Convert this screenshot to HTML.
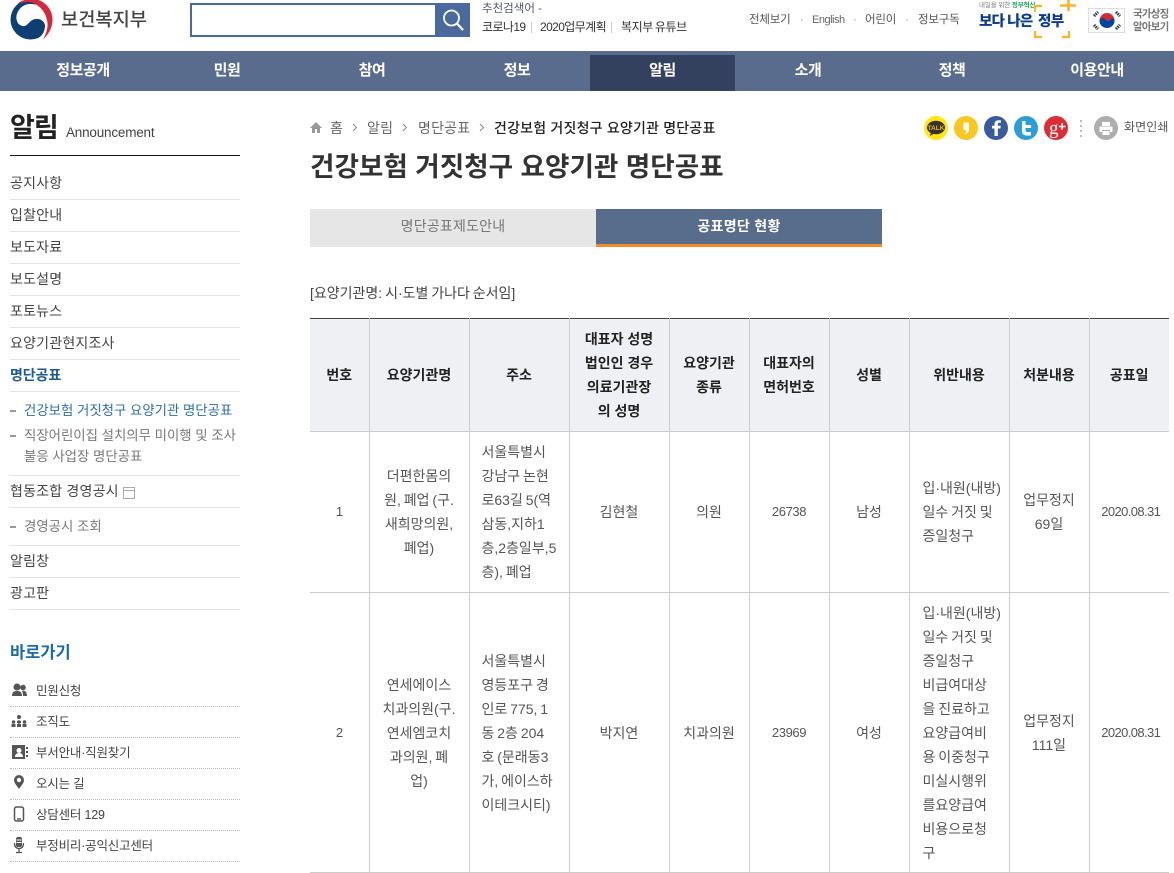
<!DOCTYPE html>
<html lang="ko"><head><meta charset="utf-8"><title>건강보험 거짓청구 요양기관 명단공표</title>
<style>
*{box-sizing:border-box}
html,body{margin:0;padding:0}
body{width:1174px;height:870px;overflow:hidden;position:relative;background:#fff;font-family:"Liberation Sans","Noto Sans CJK KR",sans-serif;color:#444;font-size:13px}
.a{position:absolute;white-space:nowrap}
.nav{position:absolute;left:0;top:51px;width:1174px;height:40px;background:#5a6c8d}
.nav div{position:absolute;top:0;height:40px;line-height:39px;color:#fff;font-weight:700;font-size:15px;letter-spacing:-.4px;text-align:center;width:146px}
.nav .on{background:#33415f;top:4px;height:36px;line-height:31px;left:590px;width:145px}
.m{position:absolute;left:10px;width:230px;height:32px;border-bottom:1px solid #e3e3e3;font-size:14px;line-height:30px;color:#444;letter-spacing:.2px}
.s{position:absolute;left:24px;font-size:13.400px;color:#777;white-space:nowrap;line-height:21px}
.s:before{content:"";position:absolute;left:-14px;top:10px;width:6px;height:2px;background:#999}
.q{position:absolute;left:10px;width:230px;height:31px;border-bottom:1px dotted #bbb}
.q span{position:absolute;left:26px;top:1px;font-size:12.500px;line-height:28px;color:#444;white-space:nowrap;letter-spacing:-.2px}
.q svg{position:absolute;left:0;top:5px}
.top{position:absolute;top:12px;font-size:11.500px;line-height:16px;color:#555;letter-spacing:-.2px;white-space:nowrap}
.sug{position:absolute;top:19px;font-size:12px;line-height:16px;color:#333;letter-spacing:-.6px;white-space:nowrap;word-spacing:-.5px}
table{position:absolute;left:310px;top:318px;width:859px;border-collapse:collapse;table-layout:fixed;border-top:1px solid #444}
th,td{border-left:1px solid #ccc;border-bottom:1px solid #ccc;text-align:center;vertical-align:middle;line-height:24px;padding:0;font-size:14px;white-space:nowrap}
th{background:#eff0f3;color:#222;font-weight:700;height:113px}
td{color:#555;word-spacing:-1px}
td.n{font-size:13px;letter-spacing:-.4px}
td.d{font-size:13px;letter-spacing:-.6px;padding-left:3px}
th:first-child,td:first-child{border-left:0}
.l{text-align:left;padding-left:12px}
.v{padding-left:13px}
</style></head><body>

<svg class="a" style="left:10px;top:-1px" width="43" height="42" viewBox="0 0 43 42"><circle cx="20.500" cy="20.500" r="20" fill="#0f3e72"/><path d="M38 36L42 20C40 9 30 5 20 5C11 5 5.500 14 6.500 20C7 25 11 27.500 14.500 27C18 26.500 19.500 21 25 20C31 19 35 23 35 27C35 31 33 36 29 38.500L33 39z" fill="#fff"/><path d="M7 5C12 1 17 0 22 0C33 0 42.500 9 42.500 21C42.500 29 38 36 33 40.500C37 33 38.500 27 37 21C35 11 27 4 19 3C15 3 10 4 7 5z" fill="#d5283a"/></svg>
<div class="a" style="left:61px;top:5px;font-size:18.700px;line-height:30px;color:#444;font-weight:500">보건복지부</div>

<div class="a" style="left:190px;top:3px;width:247px;height:34px;border:2px solid #4a6a9e;background:#fff"></div>
<div class="a" style="left:436px;top:3px;width:34px;height:34px;background:#4a6a9e"><svg width="34" height="34" viewBox="0 0 34 34"><circle cx="15.500" cy="15" r="7.500" fill="none" stroke="#fff" stroke-width="1.800"/><path d="M21 20.500l6 6.500" stroke="#fff" stroke-width="2.200"/></svg></div>
<div class="a" style="left:482px;top:1px;font-size:11.500px;line-height:16px;color:#557">추천검색어 -</div>
<div class="sug" style="left:482px">코로나19</div>
<div class="a" style="left:531px;top:22px;width:1px;height:11px;background:#ccc"></div>
<div class="sug" style="left:540px">2020업무계획</div>
<div class="a" style="left:611px;top:22px;width:1px;height:11px;background:#ccc"></div>
<div class="sug" style="left:621px;letter-spacing:-.4px;word-spacing:-1px">복지부 유튜브</div>

<div class="top" style="left:749px">전체보기</div>
<div class="top" style="left:800px;color:#999">·</div>
<div class="top" style="left:812px;font-size:11px;letter-spacing:-.5px;color:#666">English</div>
<div class="top" style="left:853px;color:#999">·</div>
<div class="top" style="left:865px">어린이</div>
<div class="top" style="left:905px;color:#999">·</div>
<div class="top" style="left:918px">정보구독</div>

<div class="a" style="left:979px;top:1px;font-size:6.500px;line-height:9px;color:#777;letter-spacing:-.1px">내일을 위한 <span style="color:#18a558;font-weight:700">정부혁신</span></div>
<div class="a" style="left:979px;top:11px;font-size:14.500px;line-height:23px;color:#0c3c8c;font-weight:900;letter-spacing:-.8px">보다 나은</div>
<div class="a" style="left:1038px;top:11px;font-size:14.500px;line-height:23px;color:#0c3c8c;font-weight:900;letter-spacing:-.5px">정부</div>
<svg class="a" style="left:1033px;top:0" width="44" height="40" viewBox="0 0 44 40"><path d="M2 12V6h7M2 31v6h7M36 31v6h-7" fill="none" stroke="#f7b52c" stroke-width="2.200"/><path d="M27 5.500h16M35.500 0v11" stroke="#f7b52c" stroke-width="2.600"/></svg>
<svg class="a" style="left:1088px;top:8px" width="37" height="25" viewBox="0 0 37 25"><rect x=".5" y=".5" width="36" height="24" fill="#fff" stroke="#ddd"/><circle cx="19" cy="12.500" r="7.500" fill="#cd2e3a"/><path d="M11.500 12.500a7.500 7.500 0 0 0 15 0c0-2-2.500-3-3.700-1s-3.800 2-5 .5-3-3-4.500-1.500c-1 .7-1.800 1-1.800 2z" fill="#0047a0"/><g stroke="#333" stroke-width="3" stroke-dasharray="1.500 .8"><path d="M6 8l4-4M28 4l4 4M6 17l4 4M28 21l4-4"/></g></svg>
<div class="a" style="left:1133px;top:8px;font-size:10.500px;line-height:13px;color:#777;font-weight:700;letter-spacing:-.8px">국가상징<br>알아보기</div>

<div class="nav">
<div style="left:10px">정보공개</div>
<div style="left:154px">민원</div>
<div style="left:299px">참여</div>
<div style="left:444px">정보</div>
<div class="on">알림</div>
<div style="left:735px">소개</div>
<div style="left:879px">정책</div>
<div style="left:1024px">이용안내</div>
</div>

<div class="a" style="left:10px;top:108px;font-size:27px;line-height:40px;color:#222;font-weight:700;letter-spacing:-1px">알림</div>
<div class="a" style="left:66px;top:124px;font-size:13.500px;line-height:18px;color:#444;letter-spacing:-.2px">Announcement</div>
<div class="a" style="left:10px;top:155px;width:230px;height:1px;background:#111"></div>

<div class="m" style="top:168px">공지사항</div>
<div class="m" style="top:200px">입찰안내</div>
<div class="m" style="top:232px">보도자료</div>
<div class="m" style="top:264px">보도설명</div>
<div class="m" style="top:296px">포토뉴스</div>
<div class="m" style="top:328px">요양기관현지조사</div>
<div class="m" style="top:360px;color:#1d5a94;font-weight:700;letter-spacing:-.1px">명단공표</div>
<div class="s" style="top:400px;color:#2d6ea8">건강보험 거짓청구 요양기관 명단공표</div>
<div class="s" style="top:425px">직장어린이집 설치의무 미이행 및 조사<br>불응 사업장 명단공표</div>
<div class="a" style="left:10px;top:475px;width:230px;height:1px;background:#e3e3e3"></div>
<div class="m" style="top:476px;height:32px">협동조합 경영공시<svg style="position:absolute;left:113px;top:11px" width="12" height="12" viewBox="0 0 12 12"><rect x=".5" y=".5" width="11" height="11" fill="none" stroke="#aaa"/><path d="M1 3.500h10" stroke="#aaa"/></svg></div>
<div class="s" style="top:516px">경영공시 조회</div>
<div class="a" style="left:10px;top:545px;width:230px;height:1px;background:#e3e3e3"></div>
<div class="m" style="top:546px">알림창</div>
<div class="m" style="top:578px">광고판</div>

<div class="a" style="left:10px;top:641px;font-size:16.500px;line-height:24px;color:#1d6aaa;font-weight:700">바로가기</div>

<div class="q" style="top:676px"><svg width="18" height="18" viewBox="0 0 18 18"><g fill="#555"><circle cx="7" cy="6" r="3.500"/><path d="M2 15c0-4 2-5 5-5s5 1 5 5z"/><circle cx="13" cy="6.500" r="2.800"/><path d="M13 15c0-3-.5-4-1-5 3-1 5 1 5 5z"/></g></svg><span>민원신청</span></div>
<div class="q" style="top:707px"><svg width="18" height="18" viewBox="0 0 18 18"><g fill="#555"><circle cx="9" cy="5" r="2"/><circle cx="3.500" cy="10" r="1.800"/><circle cx="14.500" cy="10" r="1.800"/><circle cx="9" cy="10" r="1.800"/><path d="M7 9h4v2H7zM1.500 12h4v3h-4zM7 12h4v3H7zM12.500 12h4v3h-4z"/></g></svg><span>조직도</span></div>
<div class="q" style="top:738px"><svg width="18" height="18" viewBox="0 0 18 18"><path d="M2 2h13v14H2z" fill="#555"/><circle cx="9" cy="7.500" r="2.500" fill="#fff"/><path d="M5 14c0-3 2-4 4-4s4 1 4 4z" fill="#fff"/><path d="M16 4h2v2h-2zM16 8h2v2h-2zM16 12h2v2h-2z" fill="#555"/></svg><span>부서안내·직원찾기</span></div>
<div class="q" style="top:769px"><svg width="18" height="18" viewBox="0 0 18 18"><path d="M9 1a5 5 0 0 0-5 5c0 3 3 6 5 9 2-3 5-6 5-9a5 5 0 0 0-5-5z" fill="#555"/><circle cx="9" cy="6" r="2.200" fill="#fff"/></svg><span>오시는 길</span></div>
<div class="q" style="top:800px"><svg width="18" height="18" viewBox="0 0 18 18"><rect x="4.500" y="2" width="9" height="14" rx="2" fill="none" stroke="#555" stroke-width="1.500"/><path d="M7 14h4" stroke="#555" stroke-width="1.500"/></svg><span>상담센터 129</span></div>
<div class="q" style="top:831px"><svg width="18" height="18" viewBox="0 0 18 18"><rect x="6" y="1" width="6" height="10" rx="2" fill="#555"/><path d="M6.500 4h5M6.500 6.500h5" stroke="#fff"/><path d="M4.500 7c0 4 2 5.500 4.500 5.500S13.500 11 13.500 7M9 12.500V16M6 16.500h6" fill="none" stroke="#555" stroke-width="1.300"/></svg><span>부정비리·공익신고센터</span></div>

<svg class="a" style="left:309px;top:121px" width="14" height="13" viewBox="0 0 14 13"><path d="M7 1L1 7h2v5h3V8h2v4h3V7h2z" fill="#999"/></svg>
<div class="a" style="left:330px;top:118px;font-size:14px;line-height:20px;color:#666">홈</div>
<svg class="a" style="left:352px;top:123px" width="6" height="9"><path d="M1 1l3.500 3.500L1 8" fill="none" stroke="#888"/></svg>
<div class="a" style="left:367px;top:118px;font-size:14px;line-height:20px;color:#666;letter-spacing:.2px">알림</div>
<svg class="a" style="left:402px;top:123px" width="6" height="9"><path d="M1 1l3.500 3.500L1 8" fill="none" stroke="#888"/></svg>
<div class="a" style="left:418px;top:118px;font-size:14px;line-height:20px;color:#666;letter-spacing:.2px">명단공표</div>
<svg class="a" style="left:479px;top:123px" width="6" height="9"><path d="M1 1l3.500 3.500L1 8" fill="none" stroke="#888"/></svg>
<div class="a" style="left:494px;top:118px;font-size:14px;line-height:20px;color:#222;font-weight:500;letter-spacing:.2px">건강보험 거짓청구 요양기관 명단공표</div>

<svg class="a" style="left:924px;top:115px" width="150" height="26" viewBox="0 0 150 26">
<circle cx="12" cy="13" r="12" fill="#ffe812"/><ellipse cx="12" cy="12.500" rx="9" ry="6.800" fill="#3c2f2f"/><path d="M7 17l-1 4 5-3z" fill="#3c2f2f"/><text x="12" y="15" text-anchor="middle" font-size="6.500" font-weight="700" fill="#d8c020" font-family="Liberation Sans">TALK</text>
<circle cx="42" cy="13" r="12" fill="#fac71e"/><path d="M39.500 7.500h5.500v6.500c0 2.500-1.200 4.500-3.500 5.500l-1-1c1.200-1 1.700-2.200 1.700-3.500h-2.700z" fill="#fff"/>
<circle cx="72" cy="13" r="12" fill="#3a5a9b"/><path d="M73.800 21v-7.500h2.600l.4-2.800h-3V9.200c0-.9.4-1.400 1.500-1.400h1.600V5.200h-2.300c-2.700 0-4.100 1.500-4.100 4v1.500H68v2.800h2.500V21z" fill="#fff"/>
<circle cx="102" cy="13" r="12" fill="#2d9cdb"/><path d="M98 6h3.500v4H107v3h-5.500v2.500c0 1 .5 1.500 1.500 1.500h4v3.500h-4.500c-3 0-4.500-1.700-4.500-4.500z" fill="#fff"/>
<circle cx="132" cy="13" r="12" fill="#dd2c34"/><text x="125" y="19" font-size="19" fill="#fff" font-family="Liberation Serif">g</text><path d="M135 11.500h6.500M138.200 8.200v6.500" stroke="#fff" stroke-width="1.600"/>
</svg>
<svg class="a" style="left:1078px;top:119px" width="6" height="20"><path d="M3 1v18" stroke="#bbb" stroke-width="2" stroke-dasharray="2 3"/></svg>
<svg class="a" style="left:1094px;top:116px" width="24" height="24" viewBox="0 0 24 24"><circle cx="12" cy="12" r="12" fill="#aeaeae"/><path d="M8 6h8v4H8zM5.500 10.500h13V16H16v-2H8v2H5.500zM8.500 15h7v4h-7z" fill="#fff"/></svg>
<div class="a" style="left:1124px;top:118px;font-size:12px;line-height:18px;color:#555;letter-spacing:.1px">화면인쇄</div>

<div class="a" style="left:310px;top:149px;font-size:26.600px;line-height:36px;color:#333;font-weight:700">건강보험 거짓청구 요양기관 명단공표</div>

<div class="a" style="left:310px;top:209px;width:286px;height:38px;background:#e6e6e6;text-align:center;line-height:35px;font-size:14px;color:#777;letter-spacing:.2px">명단공표제도안내</div>
<div class="a" style="left:596px;top:209px;width:286px;height:38px;background:#586c8c;border-bottom:3px solid #ee8a28;text-align:center;line-height:35px;font-size:14px;color:#fff;font-weight:700;letter-spacing:.3px">공표명단 현황</div>

<div class="a" style="left:310px;top:283px;font-size:14px;line-height:20px;color:#444;word-spacing:-1px">[요양기관명: 시·도별 가나다 순서임]</div>

<table>
<colgroup><col style="width:59px"><col style="width:100px"><col style="width:100px"><col style="width:100px"><col style="width:80px"><col style="width:80px"><col style="width:80px"><col style="width:100px"><col style="width:80px"><col style="width:80px"></colgroup>
<tr><th>번호</th><th>요양기관명</th><th>주소</th><th>대표자 성명<br>법인인 경우<br>의료기관장<br>의 성명</th><th>요양기관<br>종류</th><th>대표자의<br>면허번호</th><th>성별</th><th>위반내용</th><th>처분내용</th><th>공표일</th></tr>
<tr style="height:161px"><td class="n">1</td><td>더편한몸의<br>원, 폐업 (구.<br>새희망의원,<br>폐업)</td><td class="l">서울특별시<br>강남구 논현<br>로63길 5(역<br>삼동,지하1<br>층,2층일부,5<br>층), 폐업</td><td>김현철</td><td>의원</td><td class="n">26738</td><td>남성</td><td class="l v">입·내원(내방)<br>일수 거짓 및<br>증일청구</td><td>업무정지<br>69일</td><td class="d">2020.08.31</td></tr>
<tr style="height:280px"><td class="n">2</td><td>연세에이스<br>치과의원(구.<br>연세엠코치<br>과의원, 폐<br>업)</td><td class="l">서울특별시<br>영등포구 경<br>인로 775, 1<br>동 2층 204<br>호 (문래동3<br>가, 에이스하<br>이테크시티)</td><td>박지연</td><td>치과의원</td><td class="n">23969</td><td>여성</td><td class="l v">입·내원(내방)<br>일수 거짓 및<br>증일청구<br>비급여대상<br>을 진료하고<br>요양급여비<br>용 이중청구<br>미실시행위<br>를요양급여<br>비용으로청<br>구</td><td>업무정지<br>111일</td><td class="d">2020.08.31</td></tr>
</table>
</body></html>
